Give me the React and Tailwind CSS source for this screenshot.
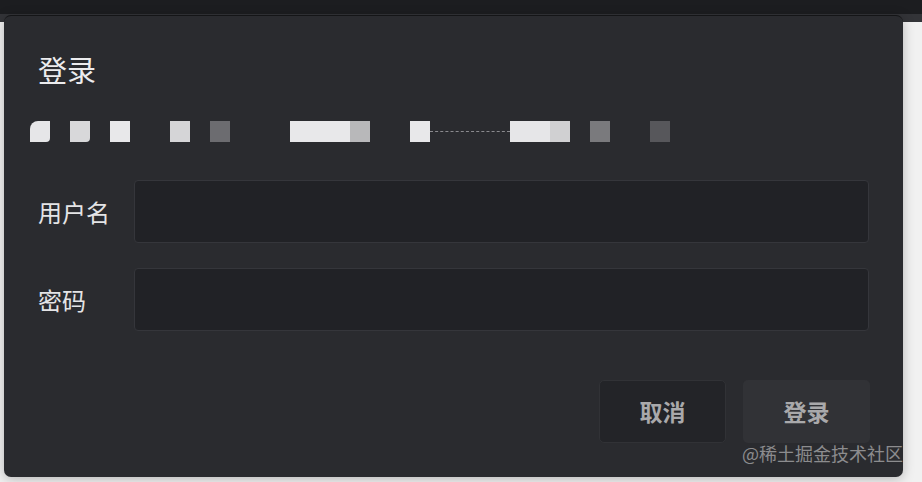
import React from 'react';

const Placeholder = () => (
  <div className="flex items-center h-[21px] pl-[26px]">
    <div className="w-5 h-[21px] bg-[#e6e6e8] rounded-tl-[8px] rounded-br-[4px]" />
    <div className="w-5 h-[21px] bg-[#d8d8da] ml-5 rounded-br-[4px]" />
    <div className="w-5 h-[21px] bg-[#e8e8ea] ml-5" />
    <div className="w-5 h-[21px] bg-[#d5d5d7] ml-10" />
    <div className="w-5 h-[21px] bg-[#6c6c70] ml-5" />
    <div className="w-[60px] h-[21px] bg-[#e8e8ea] ml-[60px]" />
    <div className="w-5 h-[21px] bg-[#b8b8ba]" />
    <div className="w-5 h-[21px] bg-[#e8e8ea] ml-10" />
    <div className="w-[80px] border-t border-dashed border-[#8a8a8e]" />
    <div className="w-10 h-[21px] bg-[#e6e6e8]" />
    <div className="w-5 h-[21px] bg-[#d0d0d2]" />
    <div className="w-5 h-[21px] bg-[#7a7a7d] ml-5" />
    <div className="w-5 h-[21px] bg-[#57575b] ml-10" />
  </div>
);

const Field = ({ label }) => (
  <div className="flex items-center">
    <label className="w-[96px] text-[24px] text-[#e4e4e6]">{label}</label>
    <input className="w-[735px] h-[63px] bg-[#212226] border border-[#35363b] rounded-[4px] outline-none px-3 text-white" />
  </div>
);

export default function App() {
  return (
    <div
      className="relative w-[922px] h-[482px] overflow-hidden bg-[#f1f1f1]"
      style={{ fontFamily: '"Noto Sans CJK SC", "Noto Sans", sans-serif' }}
    >
      <div className="h-[14px] bg-[#1c1d20]" />
      <div className="h-[8px] bg-[#333438]" />

      <div className="absolute left-[4px] top-[15px] w-[899px] h-[462px] bg-[#2a2b2f] rounded-[7px] border-t border-[#141517] shadow-[0_2px_12px_rgba(0,0,0,0.25)]">
        <div className="pl-[34px] pt-[33px] text-[29px] leading-[40px] text-[#ececee]">登录</div>

        <div className="mt-[32px]">
          <Placeholder />
        </div>

        <div className="pl-[34px] mt-[38px] flex flex-col gap-[25px]">
          <Field label="用户名" />
          <Field label="密码" />
        </div>

        <div className="flex justify-end gap-[17px] pr-[33px] mt-[49px]">
          <button className="w-[127px] h-[63px] rounded-[5px] bg-[#232428] border border-[#313236] text-[23px] font-bold text-[#a9a9ab]">
            取消
          </button>
          <button className="w-[127px] h-[63px] rounded-[5px] bg-[#313236] text-[23px] font-bold text-[#a9a9ab]">
            登录
          </button>
        </div>

        <div className="absolute right-[0px] bottom-[12px] text-[18px] leading-[24px] text-[#8c8c8e]">
          @稀土掘金技术社区
        </div>
      </div>
    </div>
  );
}
